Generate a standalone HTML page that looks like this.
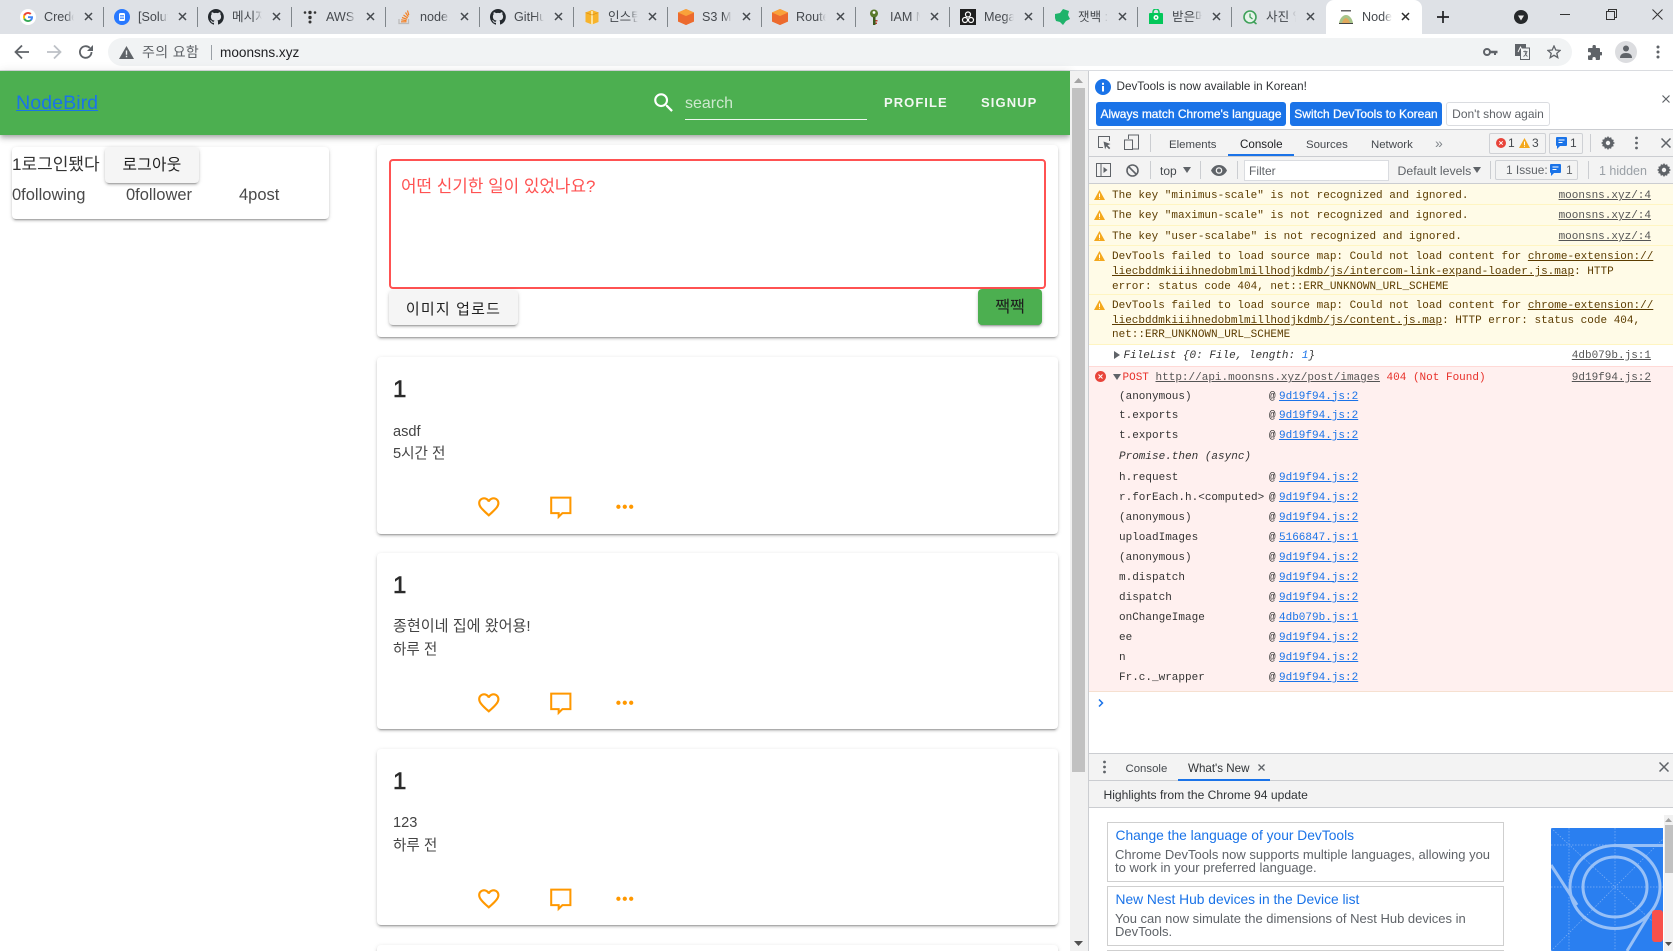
<!DOCTYPE html>
<html lang="ko"><head><meta charset="utf-8"><title>NodeBird</title>
<style>
*{box-sizing:border-box}
html,body{margin:0;padding:0;width:1673px;height:951px;overflow:hidden;background:#fff}
body{position:relative;font-family:"Liberation Sans","Noto Sans CJK KR",sans-serif;color:#303336}
.a{position:absolute}
.t{position:absolute;white-space:nowrap;line-height:16px;height:16px}
svg{position:absolute;display:block}
/* tabs */
#strip{left:0;top:0;width:1673px;height:34px;background:#dee1e6}
.tab{position:absolute;top:0;height:34px;width:94px}
.tab .ti{position:absolute;left:35px;top:9px;width:30px;height:16px;line-height:16px;font-size:12.6px;color:#45494e;white-space:nowrap;overflow:hidden;-webkit-mask-image:linear-gradient(90deg,#000 70%,transparent);mask-image:linear-gradient(90deg,#000 70%,transparent)}
.tab .ic{position:absolute;left:11px;top:9px;width:16px;height:16px}
.tab .ic svg{left:0;top:0}
.tab .cl{position:absolute;left:74.5px;top:12px;width:9px;height:9px}
.tab .cl svg{left:0;top:0}
.tab .sp{position:absolute;left:93.5px;top:7px;width:1px;height:20px;background:#80868b}
/* page */
.card{position:absolute;background:#fff;border-radius:4px;box-shadow:0 3px 1px -2px rgba(0,0,0,.2),0 2px 2px 0 rgba(0,0,0,.14),0 1px 5px 0 rgba(0,0,0,.12)}
.btn{position:absolute;border-radius:4px;background:#f5f5f5;box-shadow:0 3px 1px -2px rgba(0,0,0,.2),0 2px 2px 0 rgba(0,0,0,.14),0 1px 5px 0 rgba(0,0,0,.12);text-align:center;color:rgba(0,0,0,.87);overflow:hidden}
.post{left:377px;width:681px;height:176.5px}
.post .n{position:absolute;left:16px;top:19px;height:28px;line-height:28px;font-size:24px;font-weight:400;color:#2b2b2b;-webkit-text-stroke:.6px #2b2b2b}
.post .c{position:absolute;left:16px;top:66.5px;height:16px;line-height:16px;font-size:14.6px;color:#444;white-space:nowrap}
.post .d{position:absolute;left:16px;top:89px;height:16px;line-height:16px;font-size:14.6px;color:#444;white-space:nowrap}
.post svg{fill:#ff9800}
.post svg.cm{fill:none;stroke:#ff9800;stroke-width:1.9}
/* devtools */
.dt{font-size:12px;color:#45494e}
.vs{position:absolute;width:1px;height:18px;background:#cbcdd1}
.m{position:absolute;margin-top:1px;font-family:"Liberation Mono","Noto Sans CJK KR",monospace;font-size:11px;line-height:14px;height:14px;white-space:nowrap}
.w{color:#5c3c00;left:1112px}
.src{color:#555;text-decoration:underline;right:22px}
.s{left:1119px;color:#333}
.at{left:1269px;color:#333}
.l{left:1279px;color:#1a73e8;text-decoration:underline}
.sep{position:absolute;left:1089px;width:584px;height:1px}
.nb{position:absolute;height:24px;line-height:24px;border-radius:3px;background:#1a73e8;color:#fff;font-size:12px;text-align:center;-webkit-text-stroke:.25px #fff;white-space:nowrap}
.bx{position:absolute;border:1px solid #cfd1d5;border-radius:2px;background:#f3f3f3}
.wh{position:absolute;left:1106.5px;width:397px;height:60px;border:1px solid #cfcfcf;background:#fff}
.wh .h{position:absolute;left:8px;top:5px;font-size:13.8px;line-height:16px;color:#1a73e8;white-space:nowrap}
.wh .b{position:absolute;left:7.5px;top:25px;font-size:13px;line-height:13.2px;color:#5f6368;white-space:nowrap}
</style></head><body>

<!-- TAB STRIP -->
<div class="a" id="strip"></div>

<div class="tab" style="left:9px"><span class="ic"><svg width="16" height="16" viewBox="0 0 16 16"><circle cx="8" cy="8" r="8" fill="#fff"/><path d="M13 8.2c0-.4 0-.7-.1-1H8v1.9h2.8c-.1.7-.5 1.2-1 1.6l1.6 1.2c.9-.9 1.6-2.2 1.6-3.7z" fill="#4285f4"/><path d="M8 13c1.4 0 2.5-.5 3.4-1.2L9.8 10.6c-.5.3-1 .5-1.8.5-1.3 0-2.5-.9-2.900-2.100L3.400 10.300C4.300 11.900 6 13 8 13z" fill="#34a853"/><path d="M5.100 9C5 8.700 5 8.300 5 8s0-.7.100-1L3.400 5.700C3.100 6.400 3 7.200 3 8s.1 1.600.4 2.300z" fill="#fbbc05"/><path d="M8 4.900c.8 0 1.500.3 2 .8l1.500-1.500C10.500 3.500 9.400 3 8 3 6 3 4.300 4.100 3.400 5.700L5.100 7C5.500 5.800 6.700 4.900 8 4.900z" fill="#ea4335"/></svg></span><span class="ti">Credentials</span><span class="cl"><svg width="9" height="9" viewBox="0 0 9 9"><path d="M1 1l7 7M8 1L1 8" stroke="#45494e" stroke-width="1.500"/></svg></span><span class="sp"></span></div>

<div class="tab" style="left:103px"><span class="ic"><svg width="16" height="16" viewBox="0 0 16 16"><circle cx="8" cy="8" r="8" fill="#2979ff"/><rect x="5" y="4" width="6" height="8" rx="1.500" fill="#fff"/><path d="M6 6.500h4M6 8h4M6 9.500h4" stroke="#2979ff" stroke-width=".7"/></svg></span><span class="ti">[Solution]</span><span class="cl"><svg width="9" height="9" viewBox="0 0 9 9"><path d="M1 1l7 7M8 1L1 8" stroke="#45494e" stroke-width="1.500"/></svg></span><span class="sp"></span></div>

<div class="tab" style="left:197px"><span class="ic"><svg width="16" height="16" viewBox="0 0 16 16"><path d="M8 0a8 8 0 0 0-2.500 15.600c.4.100.5-.2.500-.4v-1.400c-2.200.5-2.700-1-2.700-1-.4-.9-.9-1.200-.9-1.200-.7-.5.100-.5.100-.5.800.100 1.200.8 1.200.8.700 1.200 1.900.9 2.300.7.100-.5.300-.9.500-1.100-1.800-.2-3.600-.9-3.600-4 0-.9.300-1.600.8-2.100-.1-.2-.4-1 .100-2.100 0 0 .7-.2 2.200.8a7.600 7.600 0 0 1 4 0c1.500-1 2.200-.8 2.200-.8.400 1.100.2 1.900.1 2.100.5.600.8 1.300.8 2.100 0 3.100-1.900 3.700-3.700 3.900.3.300.6.700.6 1.500v2.200c0 .2.100.5.600.4A8 8 0 0 0 8 0z" fill="#24292e"/></svg></span><span class="ti">메시지 - GitHub</span><span class="cl"><svg width="9" height="9" viewBox="0 0 9 9"><path d="M1 1l7 7M8 1L1 8" stroke="#45494e" stroke-width="1.500"/></svg></span><span class="sp"></span></div>

<div class="tab" style="left:291px"><span class="ic"><svg width="16" height="16" viewBox="0 0 16 16"><g fill="#333"><circle cx="3" cy="3.500" r="1.300"/><circle cx="8" cy="3.500" r="1.700"/><circle cx="13" cy="3.500" r="1.300"/><circle cx="8" cy="8.500" r="1.700"/><circle cx="8" cy="13" r="1.500"/></g></svg></span><span class="ti">AWS : : Amazon</span><span class="cl"><svg width="9" height="9" viewBox="0 0 9 9"><path d="M1 1l7 7M8 1L1 8" stroke="#45494e" stroke-width="1.500"/></svg></span><span class="sp"></span></div>

<div class="tab" style="left:385px"><span class="ic"><svg width="16" height="16" viewBox="0 0 16 16"><path d="M3 10v4.500h9.500V10" fill="none" stroke="#bcbbbb" stroke-width="1.300"/><path d="M5 12.800h5.500M5.200 10.800l5.300.8M6 8.500l5 1.800M7.500 6l4.200 3M9.500 3.500l2.800 4.200M11.500 1.500l1.300 4.700" stroke="#f48024" stroke-width="1.200" fill="none"/></svg></span><span class="ti">node.js - Stack</span><span class="cl"><svg width="9" height="9" viewBox="0 0 9 9"><path d="M1 1l7 7M8 1L1 8" stroke="#45494e" stroke-width="1.500"/></svg></span><span class="sp"></span></div>

<div class="tab" style="left:479px"><span class="ic"><svg width="16" height="16" viewBox="0 0 16 16"><path d="M8 0a8 8 0 0 0-2.500 15.600c.4.100.5-.2.500-.4v-1.400c-2.200.5-2.700-1-2.700-1-.4-.9-.9-1.200-.9-1.200-.7-.5.100-.5.100-.5.800.100 1.200.8 1.200.8.700 1.200 1.900.9 2.300.7.100-.5.300-.9.500-1.100-1.800-.2-3.600-.9-3.600-4 0-.9.300-1.600.8-2.100-.1-.2-.4-1 .100-2.100 0 0 .7-.2 2.200.8a7.600 7.600 0 0 1 4 0c1.500-1 2.200-.8 2.200-.8.400 1.100.2 1.900.1 2.100.5.600.8 1.300.8 2.100 0 3.100-1.900 3.700-3.700 3.900.3.300.6.700.6 1.500v2.200c0 .2.100.5.600.4A8 8 0 0 0 8 0z" fill="#24292e"/></svg></span><span class="ti">GitHub - moon</span><span class="cl"><svg width="9" height="9" viewBox="0 0 9 9"><path d="M1 1l7 7M8 1L1 8" stroke="#45494e" stroke-width="1.500"/></svg></span><span class="sp"></span></div>

<div class="tab" style="left:573px"><span class="ic"><svg width="16" height="16" viewBox="0 0 16 16"><path d="M1.500 3.500L8 1l6.500 2.500V13L8 15.500 1.500 13z" fill="#f7b32b"/><path d="M7 2h2v13.500H7z" fill="#fde29a"/><path d="M1.500 3.500L8 6l6.500-2.500" fill="none" stroke="#d68a10" stroke-width=".6"/></svg></span><span class="ti">인스턴스 | EC2</span><span class="cl"><svg width="9" height="9" viewBox="0 0 9 9"><path d="M1 1l7 7M8 1L1 8" stroke="#45494e" stroke-width="1.500"/></svg></span><span class="sp"></span></div>

<div class="tab" style="left:667px"><span class="ic"><svg width="16" height="16" viewBox="0 0 16 16"><path d="M8 0l8 3.500v9L8 16l-8-3.500v-9z" fill="#f58536"/><path d="M0 3.500L8 7l8-3.500v9L8 16l-8-3.500z" fill="#ec6a2e"/><path d="M8 0l8 3.500L8 7 0 3.500z" fill="#f9a13a"/></svg></span><span class="ti">S3 Manager</span><span class="cl"><svg width="9" height="9" viewBox="0 0 9 9"><path d="M1 1l7 7M8 1L1 8" stroke="#45494e" stroke-width="1.500"/></svg></span><span class="sp"></span></div>

<div class="tab" style="left:761px"><span class="ic"><svg width="16" height="16" viewBox="0 0 16 16"><path d="M8 0l8 3.500v9L8 16l-8-3.500v-9z" fill="#f58536"/><path d="M0 3.500L8 7l8-3.500v9L8 16l-8-3.500z" fill="#ec6a2e"/><path d="M8 0l8 3.500L8 7 0 3.500z" fill="#f9a13a"/></svg></span><span class="ti">Route 53</span><span class="cl"><svg width="9" height="9" viewBox="0 0 9 9"><path d="M1 1l7 7M8 1L1 8" stroke="#45494e" stroke-width="1.500"/></svg></span><span class="sp"></span></div>

<div class="tab" style="left:855px"><span class="ic"><svg width="16" height="16" viewBox="0 0 16 16"><circle cx="8" cy="4.500" r="4" fill="#5a7a2c"/><circle cx="8" cy="3.500" r="1.400" fill="#fff"/><path d="M7 8h2.500v8H7z" fill="#3c5a1e"/><path d="M9.500 11h2v1.500h-2zM9.500 13.500h1.500V15H9.500z" fill="#c0392b"/></svg></span><span class="ti">IAM Management</span><span class="cl"><svg width="9" height="9" viewBox="0 0 9 9"><path d="M1 1l7 7M8 1L1 8" stroke="#45494e" stroke-width="1.500"/></svg></span><span class="sp"></span></div>

<div class="tab" style="left:949px"><span class="ic"><svg width="16" height="16" viewBox="0 0 16 16"><rect width="16" height="16" fill="#1f1f1f"/><circle cx="8" cy="5.500" r="2.500" fill="none" stroke="#fff" stroke-width="1.200"/><circle cx="5" cy="11" r="2.500" fill="none" stroke="#fff" stroke-width="1.200"/><circle cx="11" cy="11" r="2.500" fill="none" stroke="#fff" stroke-width="1.200"/></svg></span><span class="ti">Mega Menu</span><span class="cl"><svg width="9" height="9" viewBox="0 0 9 9"><path d="M1 1l7 7M8 1L1 8" stroke="#45494e" stroke-width="1.500"/></svg></span><span class="sp"></span></div>

<div class="tab" style="left:1043px"><span class="ic"><svg width="16" height="16" viewBox="0 0 16 16"><path d="M1 5l5-1 3-4 6 2-1 4 2 4-4 2-3 4-3-3-4-1-1-3z" fill="#1fb36b"/></svg></span><span class="ti">잿백 : : 블로그</span><span class="cl"><svg width="9" height="9" viewBox="0 0 9 9"><path d="M1 1l7 7M8 1L1 8" stroke="#45494e" stroke-width="1.500"/></svg></span><span class="sp"></span></div>

<div class="tab" style="left:1137px"><span class="ic"><svg width="16" height="16" viewBox="0 0 16 16"><path d="M2 4h12a1 1 0 0 1 1 1v10H1V5a1 1 0 0 1 1-1z" fill="#03c75a"/><path d="M5 4V3a3 3 0 0 1 6 0v1" fill="none" stroke="#03c75a" stroke-width="1.500"/><circle cx="8" cy="8.500" r="2.500" fill="#fff"/><circle cx="8" cy="8.500" r="1" fill="#03c75a"/></svg></span><span class="ti">받은메일함</span><span class="cl"><svg width="9" height="9" viewBox="0 0 9 9"><path d="M1 1l7 7M8 1L1 8" stroke="#45494e" stroke-width="1.500"/></svg></span><span class="sp"></span></div>

<div class="tab" style="left:1231px"><span class="ic"><svg width="16" height="16" viewBox="0 0 16 16"><circle cx="8" cy="8" r="6" fill="#e6f4ea" stroke="#3fa15a" stroke-width="1.600"/><path d="M8 4.500V8l2.500 2" fill="none" stroke="#3fa15a" stroke-width="1.300"/><path d="M12 13l2.500 2" stroke="#3fa15a" stroke-width="1.600"/></svg></span><span class="ti">사진 업로드</span><span class="cl"><svg width="9" height="9" viewBox="0 0 9 9"><path d="M1 1l7 7M8 1L1 8" stroke="#45494e" stroke-width="1.500"/></svg></span></div>

<div class="a" style="left:1326px;top:0;width:96px;height:35px;background:#fff;border-radius:8px 8px 0 0"></div>
<div class="tab" style="left:1325px"><span class="ic" style="left:13px"><svg width="16" height="16" viewBox="0 0 16 16"><rect x="3" y="1" width="10" height="1.500" fill="#666"/><path d="M1 14c1-5 4-8 7-8s6 3 7 8z" fill="#a7c48a"/><path d="M4 14c1-3 2.500-5 4-5s3 2 4 5z" fill="#e0a85c"/><path d="M1 14.500h14" stroke="#444" stroke-width="1"/></svg></span><span class="ti" style="left:37px;width:30px">NodeBird</span><span class="cl" style="left:76px"><svg width="9" height="9" viewBox="0 0 9 9"><path d="M1 1l7 7M8 1L1 8" stroke="#2b2b2b" stroke-width="1.500"/></svg></span></div>

<svg style="left:1437px;top:11px" width="12" height="12" viewBox="0 0 12 12"><path d="M6 0v12M0 6h12" stroke="#202124" stroke-width="1.700"/></svg>
<svg style="left:1514px;top:10px" width="14" height="14" viewBox="0 0 14 14"><circle cx="7" cy="7" r="7" fill="#26282b"/><path d="M4 5.500h6L7 10.500z" fill="#e8e8e8"/></svg>
<div class="a" style="left:1560px;top:14px;width:10px;height:1px;background:#333"></div>
<svg style="left:1606px;top:9px" width="11" height="11" viewBox="0 0 11 11"><path d="M.5 2.500h8v8h-8zM2.500 2.500v-2h8v8h-2" fill="none" stroke="#333" stroke-width="1"/></svg>
<svg style="left:1652px;top:9px" width="11" height="11" viewBox="0 0 11 11"><path d="M.5.500l10 10M10.500.500l-10 10" stroke="#333" stroke-width="1"/></svg>

<!-- TOOLBAR -->
<div class="a" style="left:0;top:34px;width:1673px;height:37px;background:#fff;border-bottom:1px solid #dadce0"></div>
<svg style="left:14px;top:44px" width="16" height="16" viewBox="0 0 16 16"><path d="M15 8H2M8 1.500L1.500 8 8 14.500" fill="none" stroke="#5f6368" stroke-width="1.800"/></svg>
<svg style="left:46px;top:44px" width="16" height="16" viewBox="0 0 16 16"><path d="M1 8h13M8 1.500L14.500 8 8 14.500" fill="none" stroke="#bdc1c6" stroke-width="1.800"/></svg>
<svg style="left:78px;top:44px" width="16" height="16" viewBox="0 0 16 16"><path d="M13.500 8a5.800 5.800 0 1 1-1.700-4.100" fill="none" stroke="#5f6368" stroke-width="1.800"/><path d="M15 1v6H9z" fill="#5f6368"/></svg>
<div class="a" style="left:108px;top:38px;width:1464px;height:28px;border-radius:14px;background:#f1f3f4"></div>
<svg style="left:119px;top:46px" width="15" height="13" viewBox="0 0 15 13"><path d="M7.500 0L15 13H0z" fill="#5f6368"/><path d="M6.800 4.500h1.400v4.200H6.800zM6.800 9.800h1.400v1.400H6.800z" fill="#f1f3f4"/></svg>
<div class="t" style="left:142px;top:44px;font-size:14px;color:#5f6368;letter-spacing:.35px">주의 요함</div>
<div class="a" style="left:210.500px;top:45px;width:1px;height:15px;background:#9aa0a6"></div>
<div class="t" style="left:220px;top:45px;font-size:13.600px;color:#202124">moonsns.xyz</div>

<svg style="left:1483px;top:47px" width="15" height="10" viewBox="0 0 15 10"><circle cx="4" cy="5" r="3" fill="none" stroke="#5f6368" stroke-width="2"/><path d="M7 3.800h7.500v2.400h-1.500V8h-2V6.200H7z" fill="#5f6368"/></svg>
<svg style="left:1515px;top:44px" width="15" height="16" viewBox="0 0 15 16"><rect x=".5" y=".5" width="10" height="11" fill="#5f6368" stroke="#5f6368"/><rect x="5.500" y="4" width="9" height="11.500" fill="#f1f3f4" stroke="#5f6368"/><path d="M8 7.500h4.500M10 6.500c0 3 1 5 2.500 6M12 7.500c-.5 2.500-2 4-3.500 5" stroke="#5f6368" stroke-width=".8" fill="none"/><path d="M3 8l2.500-5L8 8" stroke="#fff" fill="none" stroke-width=".9"/></svg>
<svg style="left:1547px;top:45px" width="14" height="14" viewBox="0 0 14 14"><path d="M7 1l1.800 4 4.300.4-3.300 2.900 1 4.300L7 10.300l-3.800 2.300 1-4.300L.9 5.400 5.200 5z" fill="none" stroke="#5f6368" stroke-width="1.300"/></svg>
<svg style="left:1587px;top:45px" width="15" height="15" viewBox="0 0 15 15"><path d="M5.500 1.500a1.700 1.700 0 0 1 3.400 0V3H12a1 1 0 0 1 1 1v3h1.200a1.700 1.700 0 0 1 0 3.400H13V14a1 1 0 0 1-1 1H8.800v-1.300a1.700 1.700 0 0 0-3.400 0V15H2a1 1 0 0 1-1-1v-3.500h1.300a1.700 1.700 0 0 0 0-3.400H1V4a1 1 0 0 1 1-1h3.500z" fill="#5f6368"/></svg>
<div class="a" style="left:1615px;top:41px;width:22px;height:22px;border-radius:50%;background:#dcdde0"></div>
<svg style="left:1620px;top:45px" width="12" height="14" viewBox="0 0 12 14"><circle cx="6" cy="3.500" r="3" fill="#5f6368"/><path d="M0 13c0-3.500 2.500-5 6-5s6 1.500 6 5z" fill="#5f6368"/></svg>
<svg style="left:1656px;top:45px" width="4" height="14" viewBox="0 0 4 14"><circle cx="2" cy="2" r="1.500" fill="#5f6368"/><circle cx="2" cy="7" r="1.500" fill="#5f6368"/><circle cx="2" cy="12" r="1.500" fill="#5f6368"/></svg>

<!-- PAGE HEADER -->
<div class="card" style="left:12px;top:147px;width:317px;height:72px">
</div>
<div class="a" style="left:0;top:71px;width:1070px;height:64px;background:#4caf50;box-shadow:0 2px 4px -1px rgba(0,0,0,.2),0 4px 5px 0 rgba(0,0,0,.14),0 1px 10px 0 rgba(0,0,0,.12)"></div>
<div class="t" style="left:16px;top:92px;height:22px;line-height:22px;font-size:19.700px;color:#1a73e8;text-decoration:underline">NodeBird</div>
<svg style="left:651px;top:90px;fill:#fff" width="25.600" height="25.600" viewBox="0 0 24 24"><path d="M9.500,3A6.500,6.500 0 0,1 16,9.500C16,11.110 15.410,12.590 14.440,13.730L14.710,14H15.500L20.500,19L19,20.500L14,15.500V14.710L13.730,14.440C12.590,15.410 11.110,16 9.500,16A6.500,6.500 0 0,1 3,9.500A6.500,6.500 0 0,1 9.500,3M9.500,5C7,5 5,7 5,9.500C5,12 7,14 9.500,14C12,14 14,12 14,9.500C14,7 12,5 9.500,5Z"/></svg>
<div class="t" style="left:685px;top:94px;height:20px;line-height:20px;font-size:16px;color:rgba(255,255,255,.72)">search</div>
<div class="a" style="left:685px;top:119px;width:182px;height:1px;background:rgba(255,255,255,.9)"></div>
<div class="t" style="left:884px;top:95px;font-size:13px;font-weight:700;color:#f2f7f2;letter-spacing:1.050px">PROFILE</div>
<div class="t" style="left:981px;top:95px;font-size:13px;font-weight:700;color:#f2f7f2;letter-spacing:1.100px">SIGNUP</div>

<!-- PROFILE CARD CONTENT -->
<div class="t" style="left:12px;top:155px;height:20px;line-height:20px;font-size:17px;color:#333">1로그인됐다</div>
<div class="btn" style="left:105px;top:147px;width:94px;height:36px;line-height:38px;font-size:15.800px;letter-spacing:.2px">로그아웃</div>
<div class="t" style="left:12px;top:185px;height:20px;line-height:20px;font-size:16.500px;color:#4a4a4a">0following</div>
<div class="t" style="left:126px;top:185px;height:20px;line-height:20px;font-size:16.500px;color:#4a4a4a">0follower</div>
<div class="t" style="left:239px;top:185px;height:20px;line-height:20px;font-size:16.500px;color:#4a4a4a">4post</div>

<!-- POST FORM -->
<div class="card" style="left:377px;top:145px;width:681px;height:192px"></div>
<div class="a" style="left:389px;top:159px;width:657px;height:130px;border:2px solid #ff5252;border-radius:4px"></div>
<div class="t" style="left:401px;top:177px;height:20px;line-height:20px;font-size:16.900px;color:#ff5252">어떤 신기한 일이 있었나요?</div>
<div class="btn" style="left:389px;top:290px;width:129px;height:35px;line-height:39px;font-size:15px;letter-spacing:1.200px">이미지 업로드</div>
<div class="btn" style="left:978px;top:289px;width:64px;height:36px;line-height:38px;font-size:16px;background:#4caf50;color:#1d1d1d">짹짹</div>

<!-- POSTS -->
<div class="card post" style="top:357px"><div class="n">1</div><div class="c">asdf</div><div class="d">5시간 전</div>
<svg style="left:99px;top:137px" width="25.600" height="25.600" viewBox="0 0 24 24"><path d="M12.100,18.550L12,18.650L11.890,18.550C7.140,14.240 4,11.390 4,8.500C4,6.500 5.500,5 7.500,5C9.040,5 10.540,6 11.070,7.360H12.930C13.460,6 14.960,5 16.500,5C18.500,5 20,6.500 20,8.500C20,11.390 16.860,14.240 12.100,18.550M16.500,3C14.760,3 13.090,3.810 12,5.080C10.910,3.810 9.240,3 7.500,3C4.420,3 2,5.410 2,8.500C2,12.270 5.400,15.360 10.550,20.030L12,21.350L13.450,20.030C18.600,15.360 22,12.270 22,8.500C22,5.410 19.580,3 16.500,3Z"/></svg>
<svg class="cm" style="left:171px;top:138px" width="25.600" height="25.600" viewBox="0 0 24 24"><path d="M3 2.500H21V17H13.500L10 20.500V17H3Z"/></svg>
<svg style="left:235px;top:137px" width="25.600" height="25.600" viewBox="0 0 24 24"><path d="M16,12A2,2 0 0,1 18,10A2,2 0 0,1 20,12A2,2 0 0,1 18,14A2,2 0 0,1 16,12M10,12A2,2 0 0,1 12,10A2,2 0 0,1 14,12A2,2 0 0,1 12,14A2,2 0 0,1 10,12M4,12A2,2 0 0,1 6,10A2,2 0 0,1 8,12A2,2 0 0,1 6,14A2,2 0 0,1 4,12Z"/></svg></div>

<div class="card post" style="top:552.500px"><div class="n">1</div><div class="c" style="font-size:15.100px;top:66px">종현이네 집에 왔어용!</div><div class="d">하루 전</div>
<svg style="left:99px;top:137px" width="25.600" height="25.600" viewBox="0 0 24 24"><path d="M12.100,18.550L12,18.650L11.890,18.550C7.140,14.240 4,11.390 4,8.500C4,6.500 5.500,5 7.500,5C9.040,5 10.540,6 11.070,7.360H12.930C13.460,6 14.960,5 16.500,5C18.500,5 20,6.500 20,8.500C20,11.390 16.860,14.240 12.100,18.550M16.500,3C14.760,3 13.090,3.810 12,5.080C10.910,3.810 9.240,3 7.500,3C4.420,3 2,5.410 2,8.500C2,12.270 5.400,15.360 10.550,20.030L12,21.350L13.450,20.030C18.600,15.360 22,12.270 22,8.500C22,5.410 19.580,3 16.500,3Z"/></svg>
<svg class="cm" style="left:171px;top:138px" width="25.600" height="25.600" viewBox="0 0 24 24"><path d="M3 2.500H21V17H13.500L10 20.500V17H3Z"/></svg>
<svg style="left:235px;top:137px" width="25.600" height="25.600" viewBox="0 0 24 24"><path d="M16,12A2,2 0 0,1 18,10A2,2 0 0,1 20,12A2,2 0 0,1 18,14A2,2 0 0,1 16,12M10,12A2,2 0 0,1 12,10A2,2 0 0,1 14,12A2,2 0 0,1 12,14A2,2 0 0,1 10,12M4,12A2,2 0 0,1 6,10A2,2 0 0,1 8,12A2,2 0 0,1 6,14A2,2 0 0,1 4,12Z"/></svg></div>

<div class="card post" style="top:748.500px"><div class="n">1</div><div class="c">123</div><div class="d">하루 전</div>
<svg style="left:99px;top:137px" width="25.600" height="25.600" viewBox="0 0 24 24"><path d="M12.100,18.550L12,18.650L11.890,18.550C7.140,14.240 4,11.390 4,8.500C4,6.500 5.500,5 7.500,5C9.040,5 10.540,6 11.070,7.360H12.930C13.460,6 14.960,5 16.500,5C18.500,5 20,6.500 20,8.500C20,11.390 16.860,14.240 12.100,18.550M16.500,3C14.760,3 13.090,3.810 12,5.080C10.910,3.810 9.240,3 7.500,3C4.420,3 2,5.410 2,8.500C2,12.270 5.400,15.360 10.550,20.030L12,21.350L13.450,20.030C18.600,15.360 22,12.270 22,8.500C22,5.410 19.580,3 16.500,3Z"/></svg>
<svg class="cm" style="left:171px;top:138px" width="25.600" height="25.600" viewBox="0 0 24 24"><path d="M3 2.500H21V17H13.500L10 20.500V17H3Z"/></svg>
<svg style="left:235px;top:137px" width="25.600" height="25.600" viewBox="0 0 24 24"><path d="M16,12A2,2 0 0,1 18,10A2,2 0 0,1 20,12A2,2 0 0,1 18,14A2,2 0 0,1 16,12M10,12A2,2 0 0,1 12,10A2,2 0 0,1 14,12A2,2 0 0,1 12,14A2,2 0 0,1 10,12M4,12A2,2 0 0,1 6,10A2,2 0 0,1 8,12A2,2 0 0,1 6,14A2,2 0 0,1 4,12Z"/></svg></div>

<div class="a" style="left:370px;top:935px;width:695px;height:16px;overflow:hidden"><div class="card" style="left:7px;top:9.500px;width:681px;height:30px"></div></div>

<!-- PAGE SCROLLBAR -->
<div class="a" style="left:1070px;top:71px;width:18px;height:880px;background:#f1f1f1"></div>
<div class="a" style="left:1072px;top:88px;width:13px;height:684px;background:#c1c1c1"></div>
<svg style="left:1074px;top:78px" width="9" height="5" viewBox="0 0 9 5"><path d="M4.500 0L9 5H0z" fill="#a3a3a3"/></svg>
<svg style="left:1074px;top:941px" width="9" height="5" viewBox="0 0 9 5"><path d="M4.500 5L9 0H0z" fill="#505050"/></svg>

<!-- DEVTOOLS -->
<div class="a" style="left:1088px;top:71px;width:585px;height:880px;background:#fff;border-left:1px solid #cbcdd1"></div>

<!-- infobar -->
<svg style="left:1095px;top:79px" width="16" height="16" viewBox="0 0 16 16"><circle cx="8" cy="8" r="8" fill="#1a73e8"/><rect x="7" y="7" width="2" height="5.500" fill="#fff"/><rect x="7" y="3.800" width="2" height="2" fill="#fff"/></svg>
<div class="t dt" style="left:1116.500px;top:79px;font-size:11.700px;color:#303336">DevTools is now available in Korean!</div>
<div class="nb" style="left:1096px;top:102px;width:190px">Always match Chrome's language</div>
<div class="nb" style="left:1290px;top:102px;width:152px">Switch DevTools to Korean</div>
<div class="a" style="left:1446px;top:102px;width:104px;height:24px;line-height:22px;border:1px solid #dadce0;border-radius:3px;background:#fff;font-size:12px;color:#5f6368;text-align:center;white-space:nowrap">Don't show again</div>
<svg style="left:1662px;top:95px" width="8" height="8" viewBox="0 0 8 8"><path d="M.5.500l7 7M7.500.500l-7 7" stroke="#5f6368" stroke-width="1.200"/></svg>

<!-- main toolbar -->
<div class="a" style="left:1089px;top:129px;width:584px;height:55px;background:#f3f3f3;border-top:1px solid #cbcdd1;border-bottom:1px solid #cbcdd1"></div>
<div class="a" style="left:1089px;top:156px;width:584px;height:1px;background:#cbcdd1"></div>
<svg style="left:1097px;top:135px" width="15" height="15" viewBox="0 0 15 15"><path d="M6 12.500H1.500v-11h11V6" fill="none" stroke="#5f6368" stroke-width="1"/><path d="M6.500 6.500l7 2.500-3 1.200 2.800 2.800-1.200 1.200-2.800-2.800-1.200 3z" fill="#5f6368"/></svg>
<svg style="left:1124px;top:134px" width="15" height="16" viewBox="0 0 15 16"><path d="M4.500 5V1h10v14H9" fill="none" stroke="#5f6368"/><rect x=".5" y="6" width="8" height="9.500" fill="none" stroke="#5f6368"/></svg>
<div class="vs" style="left:1150px;top:134px"></div>
<div class="t dt" style="left:1169px;top:136.500px;font-size:11.400px">Elements</div>
<div class="t dt" style="left:1240px;top:136.500px;font-size:11.600px;color:#202124">Console</div>
<div class="a" style="left:1228px;top:154px;width:66px;height:2px;background:#1a73e8"></div>
<div class="t dt" style="left:1306px;top:136.500px;font-size:11.400px">Sources</div>
<div class="t dt" style="left:1371px;top:136.500px;font-size:11.400px">Network</div>
<div class="t" style="left:1435px;top:135px;font-size:14px;color:#80868b">»</div>
<div class="bx" style="left:1489px;top:133px;width:57px;height:21px"></div>
<svg style="left:1496px;top:138px" width="10" height="10" viewBox="0 0 10 10"><circle cx="5" cy="5" r="5" fill="#e8443a"/><path d="M3.300 3.300l3.400 3.400M6.700 3.300L3.300 6.700" stroke="#fff" stroke-width="1"/></svg>
<div class="t dt" style="left:1508px;top:135px">1</div>
<svg style="left:1519px;top:138px" width="11" height="10" viewBox="0 0 11 10"><path d="M5.500 0L11 10H0z" fill="#f4a81d"/><path d="M5 3.500h1v3.500H5zM5 7.700h1v1H5z" fill="#fff"/></svg>
<div class="t dt" style="left:1532px;top:135px">3</div>
<div class="bx" style="left:1549px;top:133px;width:34px;height:21px"></div>
<svg style="left:1556px;top:137px" width="11" height="12" viewBox="0 0 11 12"><path d="M1 0h9a1 1 0 0 1 1 1v7a1 1 0 0 1-1 1H4l-3 3V9H1a1 1 0 0 1-1-1V1a1 1 0 0 1 1-1z" fill="#1a73e8"/><path d="M2.500 3h6M2.500 5.500h4" stroke="#fff"/></svg>
<div class="t dt" style="left:1570px;top:135px">1</div>
<div class="vs" style="left:1590px;top:134px"></div>
<svg style="left:1601px;top:136px" width="14" height="14" viewBox="0 0 14 14"><path d="M7 0l1.200 1.900 2-.6.500 2.100 2.100.5-.6 2L14 7l-1.900 1.200.6 2-2.100.5-.5 2.100-2-.6L7 14l-1.200-1.900-2 .6-.5-2.100-2.100-.5.6-2L0 7l1.900-1.200-.6-2 2.100-.5.5-2.100 2 .6z" fill="#5f6368"/><circle cx="7" cy="7" r="2.200" fill="#f3f3f3"/></svg>
<svg style="left:1635px;top:136px" width="3" height="14" viewBox="0 0 3 14"><circle cx="1.500" cy="2" r="1.400" fill="#5f6368"/><circle cx="1.500" cy="7" r="1.400" fill="#5f6368"/><circle cx="1.500" cy="12" r="1.400" fill="#5f6368"/></svg>
<svg style="left:1661px;top:138px" width="10" height="10" viewBox="0 0 10 10"><path d="M.5.500l9 9M9.500.500l-9 9" stroke="#5f6368" stroke-width="1.500"/></svg>

<!-- console toolbar -->
<svg style="left:1096px;top:163px" width="15" height="14" viewBox="0 0 15 14"><rect x=".5" y=".5" width="14" height="13" fill="none" stroke="#5f6368"/><path d="M5 .5v13" stroke="#5f6368"/><path d="M7.500 4l4 3-4 3z" fill="#5f6368"/></svg>
<svg style="left:1126px;top:164px" width="13" height="13" viewBox="0 0 13 13"><circle cx="6.500" cy="6.500" r="5.500" fill="none" stroke="#5f6368" stroke-width="1.600"/><path d="M2.500 2.500l8 8" stroke="#5f6368" stroke-width="1.600"/></svg>
<div class="vs" style="left:1150px;top:161px"></div>
<div class="t dt" style="left:1160px;top:163px">top</div>
<svg style="left:1183px;top:167px" width="8" height="6" viewBox="0 0 8 6"><path d="M0 0h8L4 6z" fill="#5f6368"/></svg>
<div class="vs" style="left:1200px;top:161px"></div>
<svg style="left:1211px;top:165px" width="16" height="11" viewBox="0 0 16 11"><path d="M8 0c3.600 0 6.500 2.300 8 5.500C14.500 8.700 11.600 11 8 11S1.500 8.700 0 5.500C1.500 2.300 4.400 0 8 0z" fill="#5f6368"/><circle cx="8" cy="5.500" r="3.300" fill="#f3f3f3"/><circle cx="8" cy="5.500" r="2" fill="#5f6368"/></svg>
<div class="vs" style="left:1237px;top:161px"></div>
<div class="a" style="left:1244px;top:160px;width:145px;height:21px;background:#fff;border:1px solid #dadce0"></div>
<div class="t dt" style="left:1249px;top:163px;color:#5f6368">Filter</div>
<div class="t dt" style="left:1397.500px;top:163px;font-size:12.300px;color:#5f6368">Default levels</div>
<svg style="left:1473px;top:167px" width="8" height="6" viewBox="0 0 8 6"><path d="M0 0h8L4 6z" fill="#5f6368"/></svg>
<div class="vs" style="left:1490px;top:161px"></div>
<div class="bx" style="left:1495px;top:160px;width:83px;height:20px"></div>
<div class="t dt" style="left:1506px;top:162px;font-size:11.900px;color:#5f6368">1 Issue:</div>
<svg style="left:1550px;top:164px" width="11" height="12" viewBox="0 0 11 12"><path d="M1 0h9a1 1 0 0 1 1 1v7a1 1 0 0 1-1 1H4l-3 3V9H1a1 1 0 0 1-1-1V1a1 1 0 0 1 1-1z" fill="#1a73e8"/><path d="M2.500 3h6M2.500 5.500h4" stroke="#fff"/></svg>
<div class="t dt" style="left:1566px;top:162px;color:#5f6368">1</div>
<div class="vs" style="left:1588px;top:161px"></div>
<div class="t dt" style="left:1599px;top:163px;font-size:12.500px;color:#9aa0a6">1 hidden</div>
<svg style="left:1657px;top:163px" width="14" height="14" viewBox="0 0 14 14"><path d="M7 0l1.200 1.900 2-.6.500 2.100 2.100.5-.6 2L14 7l-1.900 1.200.6 2-2.100.5-.5 2.100-2-.6L7 14l-1.200-1.900-2 .6-.5-2.100-2.100-.5.6-2L0 7l1.900-1.200-.6-2 2.100-.5.5-2.100 2 .6z" fill="#5f6368"/><circle cx="7" cy="7" r="2.200" fill="#f3f3f3"/></svg>

<!-- console messages -->
<div class="a" style="left:1089px;top:184px;width:584px;height:160px;background:#fffbe7"></div>
<div class="sep" style="top:204px;background:#fff5c2"></div>
<div class="sep" style="top:225px;background:#fff5c2"></div>
<div class="sep" style="top:245px;background:#fff5c2"></div>
<div class="sep" style="top:294px;background:#fff5c2"></div>
<div class="sep" style="top:344px;background:#fff5c2"></div>
<div class="a" style="left:1089px;top:366px;width:584px;height:326px;background:#fff0ef;border-top:1px solid #ffd9d6;border-bottom:1px solid #f6e0d0"></div>

<svg style="left:1094px;top:190px" width="11" height="10" viewBox="0 0 11 10"><path d="M5.500 0L11 10H0z" fill="#f4a81d"/><path d="M5 3.500h1v3.500H5zM5 7.700h1v1H5z" fill="#fff"/></svg>
<svg style="left:1094px;top:210px" width="11" height="10" viewBox="0 0 11 10"><path d="M5.500 0L11 10H0z" fill="#f4a81d"/><path d="M5 3.500h1v3.500H5zM5 7.700h1v1H5z" fill="#fff"/></svg>
<svg style="left:1094px;top:231px" width="11" height="10" viewBox="0 0 11 10"><path d="M5.500 0L11 10H0z" fill="#f4a81d"/><path d="M5 3.500h1v3.500H5zM5 7.700h1v1H5z" fill="#fff"/></svg>
<svg style="left:1094px;top:251px" width="11" height="10" viewBox="0 0 11 10"><path d="M5.500 0L11 10H0z" fill="#f4a81d"/><path d="M5 3.500h1v3.500H5zM5 7.700h1v1H5z" fill="#fff"/></svg>
<svg style="left:1094px;top:300px" width="11" height="10" viewBox="0 0 11 10"><path d="M5.500 0L11 10H0z" fill="#f4a81d"/><path d="M5 3.500h1v3.500H5zM5 7.700h1v1H5z" fill="#fff"/></svg>

<div class="m w" style="top:188px">The key "minimus-scale" is not recognized and ignored.</div>
<div class="m src" style="top:188px">moonsns.xyz/:4</div>
<div class="m w" style="top:208px">The key "maximun-scale" is not recognized and ignored.</div>
<div class="m src" style="top:208px">moonsns.xyz/:4</div>
<div class="m w" style="top:229px">The key "user-scalabe" is not recognized and ignored.</div>
<div class="m src" style="top:229px">moonsns.xyz/:4</div>

<div class="m w" style="top:249px">DevTools failed to load source map: Could not load content for <u>chrome-extension://</u></div>
<div class="m w" style="top:264px"><u>liecbddmkiiihnedobmlmillhodjkdmb/js/intercom-link-expand-loader.js.map</u>: HTTP</div>
<div class="m w" style="top:279px">error: status code 404, net::ERR_UNKNOWN_URL_SCHEME</div>

<div class="m w" style="top:298px">DevTools failed to load source map: Could not load content for <u>chrome-extension://</u></div>
<div class="m w" style="top:313px"><u>liecbddmkiiihnedobmlmillhodjkdmb/js/content.js.map</u>: HTTP error: status code 404,</div>
<div class="m w" style="top:327px">net::ERR_UNKNOWN_URL_SCHEME</div>

<svg style="left:1114px;top:351px" width="6" height="8" viewBox="0 0 6 8"><path d="M0 0l6 4-6 4z" fill="#5f6368"/></svg>
<div class="m" style="left:1123.500px;top:348px;color:#333;font-style:italic">FileList {0: File, length: <span style="color:#1a73e8">1</span>}</div>
<div class="m src" style="top:348px">4db079b.js:1</div>

<svg style="left:1095px;top:371px" width="11" height="11" viewBox="0 0 11 11"><circle cx="5.500" cy="5.500" r="5.500" fill="#e8443a"/><path d="M3.500 3.500l4 4M7.500 3.500l-4 4" stroke="#fff" stroke-width="1"/></svg>
<svg style="left:1113px;top:374px" width="8" height="6" viewBox="0 0 8 6"><path d="M0 0h8L4 6z" fill="#5f6368"/></svg>
<div class="m" style="left:1122.500px;top:370px;color:#e8312a">POST <span style="color:#555;text-decoration:underline">http://api.moonsns.xyz/post/images</span> 404 (Not Found)</div>
<div class="m src" style="top:370px">9d19f94.js:2</div>

<div class="m s" style="top:388.500px">(anonymous)</div><div class="m at" style="top:388.500px">@</div><div class="m l" style="top:388.500px">9d19f94.js:2</div>
<div class="m s" style="top:408px">t.exports</div><div class="m at" style="top:408px">@</div><div class="m l" style="top:408px">9d19f94.js:2</div>
<div class="m s" style="top:428px">t.exports</div><div class="m at" style="top:428px">@</div><div class="m l" style="top:428px">9d19f94.js:2</div>
<div class="m s" style="top:449px;font-style:italic">Promise.then (async)</div>
<div class="m s" style="top:470px">h.request</div><div class="m at" style="top:470px">@</div><div class="m l" style="top:470px">9d19f94.js:2</div>
<div class="m s" style="top:490px">r.forEach.h.&lt;computed&gt;</div><div class="m at" style="top:490px">@</div><div class="m l" style="top:490px">9d19f94.js:2</div>
<div class="m s" style="top:510px">(anonymous)</div><div class="m at" style="top:510px">@</div><div class="m l" style="top:510px">9d19f94.js:2</div>
<div class="m s" style="top:530px">uploadImages</div><div class="m at" style="top:530px">@</div><div class="m l" style="top:530px">5166847.js:1</div>
<div class="m s" style="top:550px">(anonymous)</div><div class="m at" style="top:550px">@</div><div class="m l" style="top:550px">9d19f94.js:2</div>
<div class="m s" style="top:569.500px">m.dispatch</div><div class="m at" style="top:569.500px">@</div><div class="m l" style="top:569.500px">9d19f94.js:2</div>
<div class="m s" style="top:590px">dispatch</div><div class="m at" style="top:590px">@</div><div class="m l" style="top:590px">9d19f94.js:2</div>
<div class="m s" style="top:610px">onChangeImage</div><div class="m at" style="top:610px">@</div><div class="m l" style="top:610px">4db079b.js:1</div>
<div class="m s" style="top:630px">ee</div><div class="m at" style="top:630px">@</div><div class="m l" style="top:630px">9d19f94.js:2</div>
<div class="m s" style="top:650px">n</div><div class="m at" style="top:650px">@</div><div class="m l" style="top:650px">9d19f94.js:2</div>
<div class="m s" style="top:670px">Fr.c._wrapper</div><div class="m at" style="top:670px">@</div><div class="m l" style="top:670px">9d19f94.js:2</div>

<svg style="left:1098px;top:699px" width="6" height="8" viewBox="0 0 6 8"><path d="M1 .5L4.500 4 1 7.500" fill="none" stroke="#1a73e8" stroke-width="1.500"/></svg>

<!-- drawer -->
<div class="a" style="left:1089px;top:753px;width:584px;height:55px;background:#f3f3f3;border-top:1px solid #cbcdd1;border-bottom:1px solid #cbcdd1"></div>
<div class="a" style="left:1089px;top:780px;width:584px;height:1px;background:#cbcdd1"></div>
<svg style="left:1103px;top:760px" width="3" height="14" viewBox="0 0 3 14"><circle cx="1.500" cy="2" r="1.400" fill="#5f6368"/><circle cx="1.500" cy="7" r="1.400" fill="#5f6368"/><circle cx="1.500" cy="12" r="1.400" fill="#5f6368"/></svg>
<div class="t dt" style="left:1125.500px;top:761px;font-size:11.400px">Console</div>
<div class="t dt" style="left:1188px;top:761px;font-size:11.600px;color:#303336">What's New</div>
<svg style="left:1258px;top:764px" width="7" height="7" viewBox="0 0 7 7"><path d="M.5.500l6 6M6.500.500l-6 6" stroke="#5f6368" stroke-width="1.300"/></svg>
<div class="a" style="left:1178px;top:779px;width:92px;height:2px;background:#1a73e8"></div>
<svg style="left:1659px;top:762px" width="10" height="10" viewBox="0 0 10 10"><path d="M.5.500l9 9M9.500.500l-9 9" stroke="#5f6368" stroke-width="1.500"/></svg>
<div class="t dt" style="left:1103.500px;top:787px;font-size:12.100px;color:#303336">Highlights from the Chrome 94 update</div>

<div class="wh" style="top:822px"><div class="h" style="top:4.500px">Change the language of your DevTools</div><div class="b">Chrome DevTools now supports multiple languages, allowing you<br>to work in your preferred language.</div></div>
<div class="wh" style="top:886px"><div class="h" style="top:4.500px">New Nest Hub devices in the Device list</div><div class="b">You can now simulate the dimensions of Nest Hub devices in<br>DevTools.</div></div>
<div class="a" style="left:1106.500px;top:950px;width:397px;height:1px;background:#cfcfcf"></div>

<svg style="left:1551px;top:828px" width="112" height="123" viewBox="0 0 112 123">
<rect width="112" height="123" fill="#2a7ff0"/>
<g stroke="#7fb0f5" stroke-width=".7" stroke-dasharray="1.500 1.500" fill="none"><path d="M0 0l64 59 48 44M0 123L64 59 112 11M64 0v123M0 59h112M0 17h112M18 0v123"/></g>
<g fill="none" stroke="#97c0f7" stroke-width="3"><ellipse cx="64" cy="59" rx="32" ry="30"/><ellipse cx="64" cy="59" rx="45" ry="41.500"/><path d="M64 17.500H112"/><path d="M0 37l26 40"/><path d="M99 85L76 123"/></g>
<rect x="101" y="82" width="11" height="32" rx="3" fill="#f8504a"/>
</svg>

<div class="a" style="left:1663.500px;top:815px;width:9.500px;height:136px;background:#f1f1f1"></div>
<div class="a" style="left:1665px;top:825px;width:8px;height:48px;background:#c1c1c1"></div>
<svg style="left:1665px;top:818px" width="7" height="4" viewBox="0 0 7 4"><path d="M3.500 0L7 4H0z" fill="#a3a3a3"/></svg>
<svg style="left:1665px;top:942px" width="7" height="4" viewBox="0 0 7 4"><path d="M3.500 4L7 0H0z" fill="#505050"/></svg>
</body></html>
